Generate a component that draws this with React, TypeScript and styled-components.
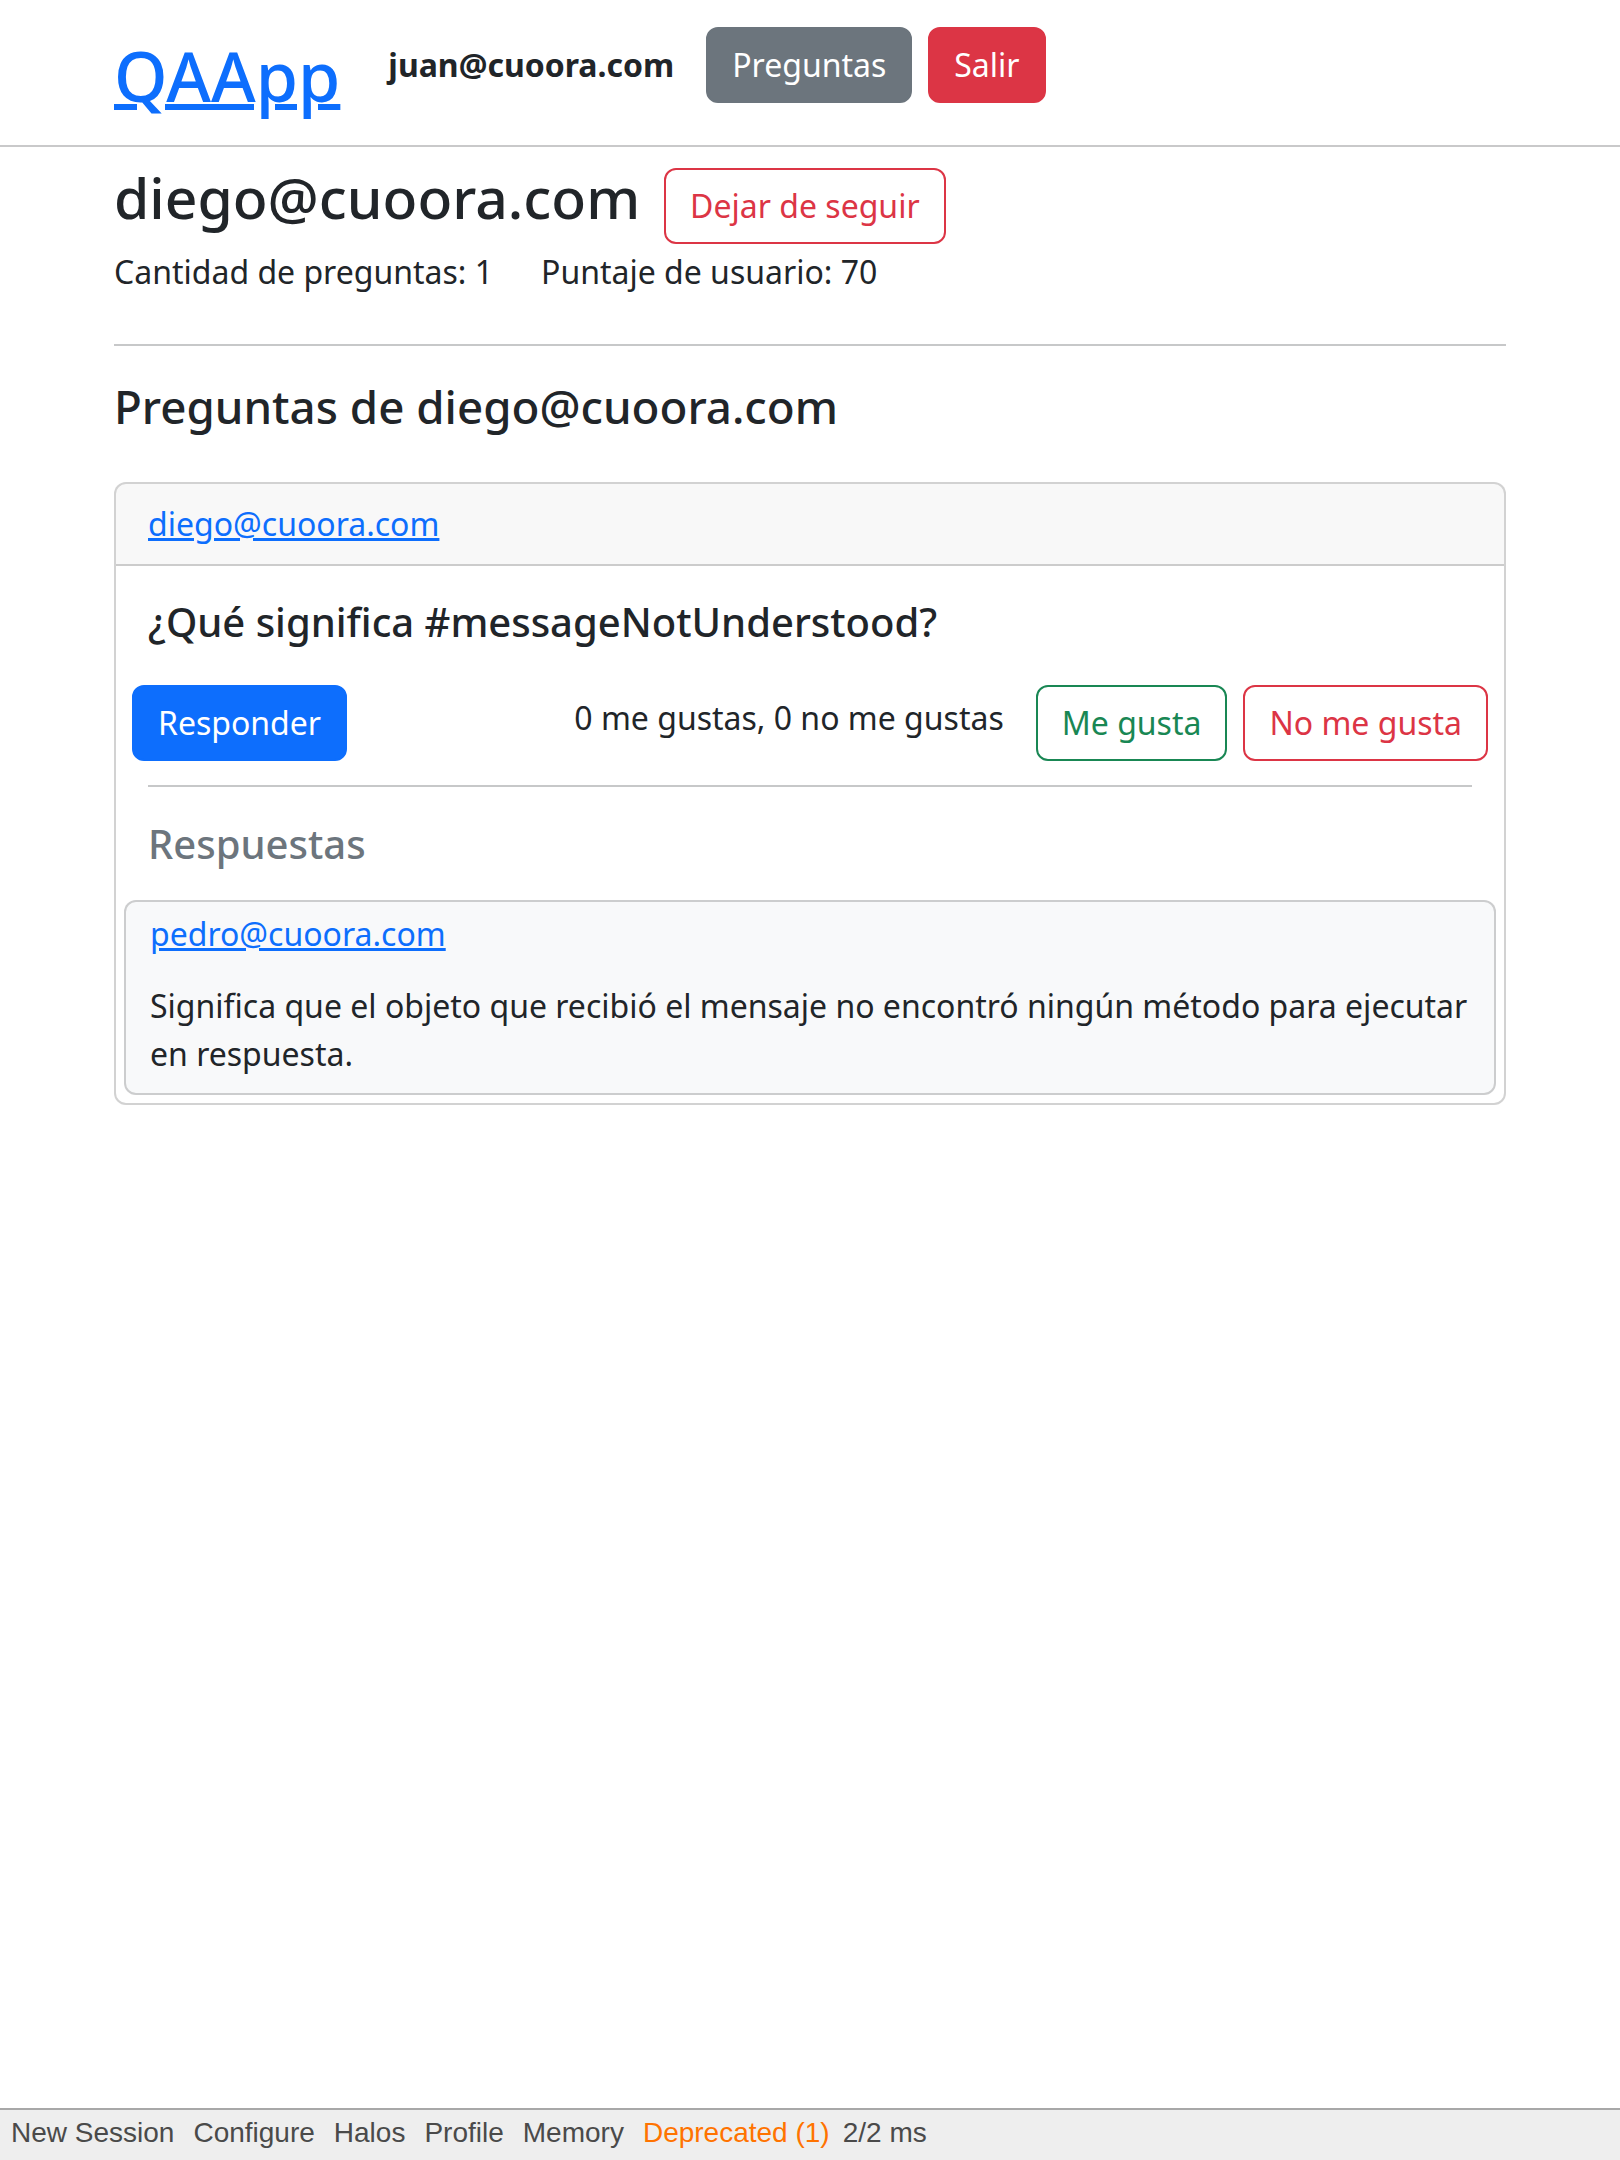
import React from "react";
import styled, { createGlobalStyle } from "styled-components";

const GlobalStyle = createGlobalStyle`
  html, body { margin: 0; padding: 0; }
  body {
    font-family: "Noto Sans", "Open Sans", sans-serif;
    font-size: 32px;
    line-height: 1.5;
    color: #212529;
    background: #fff;
  }
  *, *::before, *::after { box-sizing: border-box; }
`;

const Page = styled.div`
  min-height: 100vh;
  display: flex;
  flex-direction: column;
`;

const Main = styled.main`
  flex: 1;
`;

const Header = styled.header`
  border-bottom: 2px solid #c9c9ca;
`;

const Container = styled.div`
  width: 1440px;
  margin: 0 auto;
  padding: 0 24px;
`;

const NavBar = styled(Container)`
  display: flex;
  align-items: flex-start;
  padding-top: 27px;
  padding-bottom: 28px;
`;

const Link = styled.a`
  color: #0d6efd;
  text-decoration: underline;
  cursor: pointer;
`;

const BrandLink = styled(Link)`
  text-underline-offset: 2px;
`;

const Brand = styled.h1`
  font-size: 68.3px;
  line-height: 1.2;
  font-weight: 500;
  margin: 8px 48px 0 0;
`;

const UserEmail = styled.span`
  font-weight: 700;
  margin: 14px 32px 0 0;
`;

const NavButtons = styled.div`
  display: flex;
  gap: 16px;
`;

type Variant = "primary" | "secondary" | "danger" | "outline-danger" | "outline-success";

const palette: Record<Variant, { bg: string; color: string; border: string }> = {
  primary: { bg: "#0d6efd", color: "#fff", border: "#0d6efd" },
  secondary: { bg: "#6c757d", color: "#fff", border: "#6c757d" },
  danger: { bg: "#dc3545", color: "#fff", border: "#dc3545" },
  "outline-danger": { bg: "transparent", color: "#dc3545", border: "#dc3545" },
  "outline-success": { bg: "transparent", color: "#198754", border: "#198754" },
};

const Button = styled.button<{ $variant: Variant }>`
  font-family: inherit;
  font-size: 32px;
  line-height: 48px;
  font-weight: 400;
  padding: 12px 24px;
  border-radius: 12px;
  border: 2px solid ${(p) => palette[p.$variant].border};
  background: ${(p) => palette[p.$variant].bg};
  color: ${(p) => palette[p.$variant].color};
  cursor: pointer;
  white-space: nowrap;
`;

const Profile = styled(Container)`
  padding-top: 16px;
`;

const ProfileRow = styled.div`
  display: flex;
  align-items: baseline;
  gap: 24px;
`;

const ProfileName = styled.h2`
  font-size: 57px;
  line-height: 1.2;
  font-weight: 500;
  margin: 0 0 16px;
`;

const FollowButton = styled(Button)`
  position: relative;
  top: -1px;
`;

const Stats = styled.p`
  display: flex;
  gap: 48px;
  margin: 1px 0 0;
`;

const Rule = styled.hr<{ $inset?: number }>`
  border: 0;
  border-top: 2px solid #212529;
  opacity: 0.25;
  margin: 0 ${(p) => p.$inset ?? 0}px;
`;

const ProfileRule = styled(Rule)`
  margin-top: 48px;
  margin-bottom: 33px;
`;

const SectionTitle = styled.h4`
  font-size: 45.7px;
  line-height: 1.2;
  font-weight: 500;
  margin: 0 0 48px;
`;

const Card = styled.div`
  border: 2px solid rgba(0, 0, 0, 0.175);
  border-radius: 12px;
  background: #fff;
`;

const CardHeader = styled.div`
  padding: 16px 32px;
  background: rgba(33, 37, 41, 0.03);
  border-bottom: 2px solid rgba(0, 0, 0, 0.175);
  border-radius: 10px 10px 0 0;
`;

const CardBody = styled.div`
  padding: 32px 8px 8px;
`;

const QuestionTitle = styled.h5`
  font-size: 40px;
  line-height: 1.2;
  font-weight: 500;
  margin: 0 24px 39px;
`;

const ActionRow = styled.div`
  display: flex;
  align-items: center;
  justify-content: space-between;
  padding: 0 8px;
`;

const Votes = styled.div`
  display: flex;
  align-items: center;
  gap: 16px;
`;

const VoteCount = styled.span`
  margin: 0 16px 10px 0;
`;

const AnswersRule = styled(Rule)`
  margin-top: 24px;
`;

const AnswersTitle = styled.h5`
  font-size: 40px;
  line-height: 1.2;
  font-weight: 500;
  color: #6c757d;
  margin: 33px 24px 32px;
`;

const AnswerCard = styled.div`
  background: #f8f9fa;
  border: 2px solid rgba(0, 0, 0, 0.175);
  border-radius: 12px;
  padding: 8px 16px 15px 24px;
`;

const AnswerAuthor = styled.div`
  margin-bottom: 24px;
`;

const AnswerText = styled.p`
  margin: 0;
`;

const Toolbar = styled.footer`
  display: flex;
  background: #eeeeee;
  border-top: 2px solid #a8a8a8;
  padding: 7px 10px 11px 11px;
  font-family: "Liberation Sans", Arial, sans-serif;
  font-size: 28px;
  line-height: 32px;
  color: #4a4a4a;
`;

const ToolItem = styled.span<{ $warn?: boolean; $gap?: number }>`
  color: ${(p) => (p.$warn ? "#ff7300" : "#4a4a4a")};
  white-space: nowrap;
  margin-right: ${(p) => p.$gap ?? 19}px;
`;

export default function App() {
  return (
    <Page>
      <GlobalStyle />
      <Main>
        <Header>
          <NavBar>
            <Brand>
              <BrandLink>QAApp</BrandLink>
            </Brand>
            <UserEmail>juan@cuoora.com</UserEmail>
            <NavButtons>
              <Button $variant="secondary">Preguntas</Button>
              <Button $variant="danger">Salir</Button>
            </NavButtons>
          </NavBar>
        </Header>

        <Profile>
          <ProfileRow>
            <ProfileName>diego@cuoora.com</ProfileName>
            <FollowButton $variant="outline-danger">Dejar de seguir</FollowButton>
          </ProfileRow>
          <Stats>
            <span>Cantidad de preguntas: 1</span>
            <span>Puntaje de usuario: 70</span>
          </Stats>
          <ProfileRule />
          <SectionTitle>Preguntas de diego@cuoora.com</SectionTitle>

          <Card>
            <CardHeader>
              <Link>diego@cuoora.com</Link>
            </CardHeader>
            <CardBody>
              <QuestionTitle>¿Qué significa #messageNotUnderstood?</QuestionTitle>
              <ActionRow>
                <Button $variant="primary">Responder</Button>
                <Votes>
                  <VoteCount>0 me gustas, 0 no me gustas</VoteCount>
                  <Button $variant="outline-success">Me gusta</Button>
                  <Button $variant="outline-danger">No me gusta</Button>
                </Votes>
              </ActionRow>
              <AnswersRule $inset={24} />
              <AnswersTitle>Respuestas</AnswersTitle>
              <AnswerCard>
                <AnswerAuthor>
                  <Link>pedro@cuoora.com</Link>
                </AnswerAuthor>
                <AnswerText>
                  Significa que el objeto que recibió el mensaje no encontró ningún método para ejecutar en respuesta.
                </AnswerText>
              </AnswerCard>
            </CardBody>
          </Card>
        </Profile>
      </Main>

      <Toolbar>
        <ToolItem>New Session</ToolItem>
        <ToolItem>Configure</ToolItem>
        <ToolItem>Halos</ToolItem>
        <ToolItem>Profile</ToolItem>
        <ToolItem>Memory</ToolItem>
        <ToolItem $warn $gap={13}>Deprecated (1)</ToolItem>
        <ToolItem $gap={0}>2/2 ms</ToolItem>
      </Toolbar>
    </Page>
  );
}
